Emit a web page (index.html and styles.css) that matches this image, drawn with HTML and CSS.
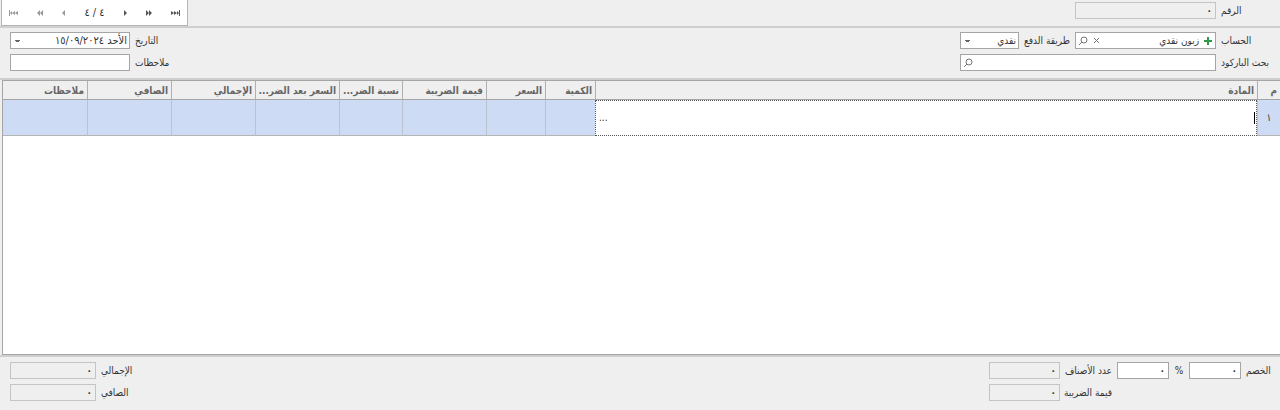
FILE: index.html
```
<!DOCTYPE html>
<html lang="ar" dir="rtl">
<head>
<meta charset="utf-8">
<meta name="viewport" content="width=device-width, initial-scale=1.0">
  <title>فاتورة</title>
  <link rel="stylesheet" href="styles.css">
</head>
<body>

  <header class="barra">
    <div class="campos numero">
      <label for="numero">الرقم</label>
      <input id="numero" class="campo cifra" type="text" value="٠" readonly>
    </div>
    <nav class="navegador">
      <button aria-label="الأخير"><svg width="9" height="6"><path d="M0 1l3 2-3 2zM3 1l3 2-3 2zM6 1l2 2-2 2zM8 0h1v6H8z"/></svg></button>
      <button aria-label="تقدم"><svg width="6" height="6"><path d="M0 0l3 3-3 3zM3 0l3 3-3 3z"/></svg></button>
      <button aria-label="التالي"><svg width="3" height="6"><path d="M0 0l3 3-3 3z"/></svg></button>
      <span class="pagina">٤ / ٤</span>
      <button class="suave" aria-label="السابق"><svg width="3" height="6"><path d="M3 0L0 3l3 3z"/></svg></button>
      <button class="suave" aria-label="رجوع"><svg width="6" height="6"><path d="M3 0L0 3l3 3zM6 0L3 3l3 3z"/></svg></button>
      <button class="suave" aria-label="الأول"><svg width="9" height="6"><path d="M0 0h1v6H0zM3 1L1 3l2 2zM6 1L3 3l3 2zM9 1L6 3l3 2z"/></svg></button>
    </nav>
  </header>

  <section class="panel">
    <div class="campos cuenta">
      <label for="cuenta">الحساب</label>
      <div class="campo caja">
        <button class="mas" aria-label="إضافة"><svg width="8" height="8"><path d="M4 0v8M0 4h8"/></svg></button>
        <input id="cuenta" type="text" value="زبون نقدي">
        <button aria-label="مسح"><svg width="7" height="7"><path d="M1 1l5 5M6 1l-5 5"/></svg></button>
        <button aria-label="بحث"><svg width="9" height="9"><circle cx="5" cy="4" r="3"/><path d="M3 6L0 9"/></svg></button>
      </div>
      <label for="pago">طريقة الدفع</label>
      <select id="pago" class="campo lista"><option>نقدي</option></select>
      <label for="barras">بحث الباركود</label>
      <div class="campo caja ancho">
        <input id="barras" type="text">
        <button aria-label="بحث"><svg width="9" height="9"><circle cx="5" cy="4" r="3"/><path d="M3 6L0 9"/></svg></button>
      </div>
    </div>
    <div class="campos fecha">
      <label for="fecha">التاريخ</label>
      <select id="fecha" class="campo lista dia"><option>الأحد ١٥/٠٩/٢٠٢٤</option></select>
      <label for="notas">ملاحظات</label>
      <input id="notas" class="campo" type="text">
    </div>
  </section>

  <main class="rejilla">
    <table>
      <colgroup>
        <col class="c-num"><col><col class="c-cant"><col class="c-precio"><col class="c-medio">
        <col class="c-tasa"><col class="c-medio"><col class="c-medio"><col class="c-medio"><col class="c-medio">
      </colgroup>
      <thead>
        <tr>
          <th>م</th>
          <th>المادة</th>
          <th>الكمية</th>
          <th>السعر</th>
          <th>قيمة الضريبة</th>
          <th>نسبة الضر...</th>
          <th>السعر بعد الضر...</th>
          <th>الإجمالي</th>
          <th>الصافي</th>
          <th>ملاحظات</th>
        </tr>
      </thead>
      <tbody>
        <tr>
          <td class="indice">١</td>
          <td class="activa">
            <div class="editor">
              <span class="cursor"></span>
              <button aria-label="اختيار المادة">...</button>
            </div>
          </td>
          <td></td><td></td><td></td><td></td><td></td><td></td><td></td><td></td>
        </tr>
      </tbody>
    </table>
  </main>

  <footer class="panel pie">
    <div class="campos totales">
      <label for="descuento">الخصم</label>
      <input id="descuento" class="campo cifra" type="text" value="٠">
      <label class="centro" for="porcentaje">%</label>
      <input id="porcentaje" class="campo cifra" type="text" value="٠">
      <label for="articulos">عدد الأصناف</label>
      <input id="articulos" class="campo cifra" type="text" value="٠" readonly>
      <label class="impuesto" for="impuesto">قيمة الضريبة</label>
      <input id="impuesto" class="campo cifra" type="text" value="٠" readonly>
    </div>
    <div class="campos sumas">
      <label for="total">الإجمالي</label>
      <input id="total" class="campo cifra" type="text" value="٠" readonly>
      <label for="neto">الصافي</label>
      <input id="neto" class="campo cifra" type="text" value="٠" readonly>
    </div>
  </footer>

</body>
</html>
```
FILE: styles.css
```
* {
  margin: 0;
  padding: 0;
  box-sizing: border-box;
}

body {
  min-height: 100vh;
  display: flex;
  flex-direction: column;
  background: #efefef;
  color: #333;
  font-family: "DejaVu Sans Condensed", "DejaVu Sans", sans-serif;
  font-size: 10px;
  line-height: 16px;
}

input, select, button {
  font: inherit;
  color: inherit;
  background: none;
  border: none;
  outline: none;
}

button {
  display: flex;
  align-items: center;
  justify-content: center;
  cursor: pointer;
}

.barra {
  display: flex;
  justify-content: space-between;
  align-items: flex-start;
  height: 28px;
  border-bottom: 2px solid #cfcfcf;
}

.navegador {
  display: flex;
  align-items: center;
  justify-content: space-between;
  width: 187px;
  height: 26px;
  margin-left: 1px;
  padding: 0 7px;
  background: #fff;
  border: 1px solid #b5b5b5;
  border-top: none;
}

.navegador svg { fill: #555; }
.navegador .suave svg { fill: #999; }
.pagina { font-size: 11px; }

.campos {
  display: grid;
  gap: 5px;
  align-items: center;
}

.campos label {
  text-align: left;
  white-space: nowrap;
}

.campo {
  width: 100%;
  min-width: 0;
  height: 17px;
  padding: 0 3px;
  line-height: 15px;
  background: #fff;
  border: 1px solid #a5a5a5;
}

.campo[readonly] {
  background: #efefef;
  border-color: #c4c4c4;
}

.cifra { font-weight: bold; }

.caja {
  display: flex;
  align-items: center;
  gap: 5px;
}

.caja input {
  flex: 1;
  min-width: 0;
  height: 15px;
}

.caja svg {
  fill: none;
  stroke: #777;
}

.caja .mas svg {
  stroke: #2b9a49;
  stroke-width: 2;
}

.lista {
  appearance: none;
  padding: 0 2px;
  background-image: linear-gradient(#666, #666), linear-gradient(#666, #666);
  background-repeat: no-repeat;
  background-size: 5px 1px, 3px 1px;
  background-position: 4px 7px, 5px 8px;
}

.dia { font-size: 11px; }

.numero {
  grid-template-columns: 59px 141px;
  margin-top: 2px;
}

.panel {
  display: flex;
  justify-content: space-between;
  align-items: flex-start;
  height: 52px;
  padding: 4px 0 0 10px;
  border-bottom: 2px solid #cfcfcf;
}

.cuenta { grid-template-columns: 59px 141px 46px 59px; }
.cuenta .ancho { grid-column: span 3; }
.fecha { grid-template-columns: auto 120px; }

.rejilla {
  flex: 1;
  margin-left: 2px;
  background: #fff;
  border: 1px solid #a5a5a5;
  border-right: none;
}

table {
  width: 100%;
  table-layout: fixed;
  border-collapse: separate;
  border-spacing: 0;
}

.c-num { width: 23px; }
.c-cant { width: 50px; }
.c-precio { width: 59px; }
.c-medio { width: 84px; }
.c-tasa { width: 63px; }

th {
  height: 19px;
  padding: 2px 3px 0;
  overflow: hidden;
  color: #666;
  background: #efefef;
  border-left: 1px solid #b0b0b0;
  border-bottom: 1px solid #a5a5a5;
  text-align: right;
  white-space: nowrap;
}

td {
  height: 36px;
  background: #cddbf4;
  border-left: 1px solid #bcc3d0;
  border-bottom: 1px solid #b5b5b5;
}

th:last-child, td:last-child { border-left: none; }

.indice { text-align: center; }

.activa {
  background: #fff;
  border: 1px dotted #555;
}

.editor {
  display: flex;
  align-items: center;
  justify-content: space-between;
  padding: 0 1px 0 3px;
}

.cursor {
  width: 1px;
  height: 12px;
  background: #000;
}

.pie {
  height: 55px;
  padding-top: 5px;
  border-top: 2px solid #cfcfcf;
  border-bottom: none;
}

.totales { grid-template-columns: 34px 52px 10px 52px 47px 71px; }
.totales .centro { text-align: center; }
.totales .impuesto { grid-column: 5; }
.sumas { grid-template-columns: auto 86px; }
```
